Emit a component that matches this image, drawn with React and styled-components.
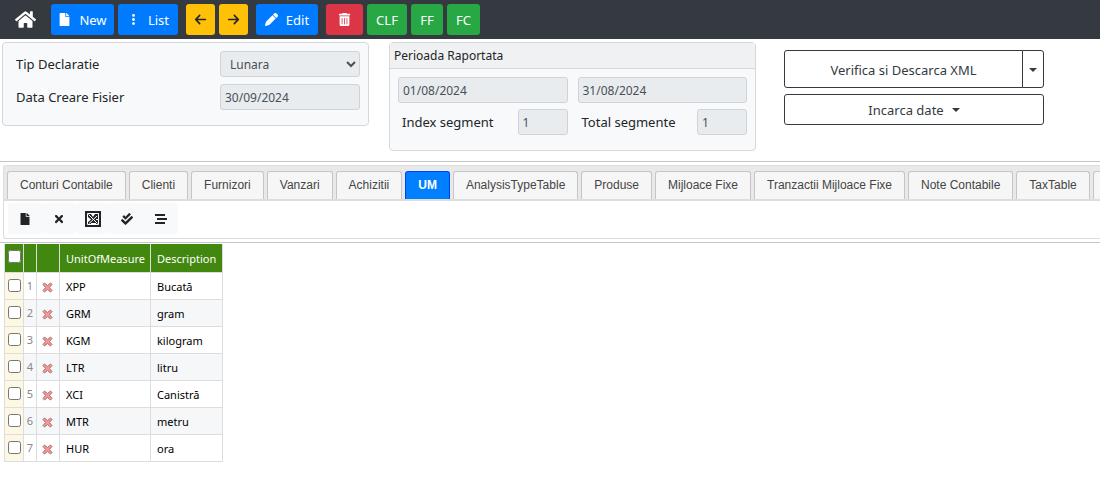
import React from "react";
import styled, { createGlobalStyle, css } from "styled-components";
import { FaHome, FaFile, FaCheckDouble, FaTimes } from "react-icons/fa";
import { FaArrowLeft, FaArrowRight, FaEllipsisVertical, FaPen, FaTrashCan } from "react-icons/fa6";

const GlobalStyle = createGlobalStyle`
  * {
    box-sizing: border-box;
  }
  body {
    margin: 0;
    background: #fff;
    color: #212529;
    font-family: "Segoe UI", "Noto Sans", sans-serif;
    font-size: 13px;
    line-height: 20px;
    overflow-x: hidden;
  }
  button, input, select {
    font: inherit;
  }
`;

const Navbar = styled.header`
  display: flex;
  align-items: center;
  height: 39px;
  padding-left: 15px;
  background: #343a40;
`;

const HomeLink = styled.a`
  display: flex;
  margin-right: 15px;
  color: #fff;
  font-size: 21px;
`;

const ButtonGroup = styled.div`
  display: flex;
  gap: 4px;
  margin-right: 8px;
`;

const colors = {
  blue: css`
    background: #007bff;
    color: #fff;
  `,
  yellow: css`
    background: #ffc107;
    color: #212529;
  `,
  red: css`
    background: #dc3545;
    color: #fff;
  `,
  green: css`
    background: #28a745;
    color: #fff;
  `,
};

const NavButton = styled.button`
  display: flex;
  align-items: center;
  justify-content: center;
  gap: 8px;
  height: 31px;
  min-width: ${(props) => props.$width}px;
  padding: 0;
  border: 0;
  border-radius: 3px;
  ${(props) => colors[props.$color]}
`;

const Filters = styled.section`
  display: grid;
  grid-template-columns: 1fr 1fr 324px;
  align-items: start;
  gap: 20px;
  padding: 3px 0 10px 2px;
`;

const Card = styled.div`
  border: 1px solid #d5d8da;
  border-radius: 4px;
  background: #f8f9fa;
`;

const CardTitle = styled.div`
  height: 26px;
  padding: 3px 4px;
  border-bottom: 1px solid #d5d8da;
  background: #f0f1f2;
  font-size: 12px;
`;

const DeclarationFields = styled.div`
  display: grid;
  grid-template-columns: 1fr 140px;
  align-items: center;
  row-gap: 7px;
  padding: 8px 8px 15px 13px;
`;

const PeriodFields = styled.div`
  display: grid;
  grid-template-columns: 1fr 1fr;
  gap: 6px 10px;
  padding: 8px 8px 15px;
`;

const Segment = styled.div`
  display: flex;
  align-items: center;
  justify-content: space-between;
  padding-left: 4px;
`;

const fieldStyle = css`
  width: ${(props) => (props.$short ? "50px" : "100%")};
  height: 26px;
  border: 1px solid #ced4da;
  border-radius: 3px;
  background: #e9ecef;
  color: #495057;
  font-size: 12px;
  opacity: 1;
`;

const Input = styled.input`
  ${fieldStyle}
  padding: 1px 4px 0;
`;

const Select = styled.select`
  ${fieldStyle}
  padding: 0 0 0 5px;
`;

const Actions = styled.div`
  display: flex;
  flex-direction: column;
  gap: 6px;
  padding: 8px 56px 0 8px;
`;

const SplitButton = styled.div`
  display: flex;
`;

const OutlineButton = styled.button`
  display: flex;
  flex: 1;
  align-items: center;
  justify-content: center;
  gap: 8px;
  min-height: ${(props) => (props.$tall ? 38 : 31)}px;
  padding: 1px 0 0;
  border: 1px solid #343a40;
  border-radius: ${(props) => (props.$tall ? "3px 0 0 3px" : "3px")};
  background: #fff;
  color: #343a40;
`;

const ToggleButton = styled(OutlineButton)`
  flex: 0 0 22px;
  margin-left: -1px;
  border-radius: 0 3px 3px 0;
`;

const Caret = styled.span`
  border: 4px solid transparent;
  border-top-color: currentColor;
  border-bottom: 0;
`;

const TabsFrame = styled.section`
  padding: 3px 0 3px 3px;
  border: solid #c5c5c5;
  border-width: 1px 0;
`;

const Tabs = styled.div`
  border: 1px solid #ddd;
  border-right: 0;
  border-radius: 3px 0 0 3px;
  overflow: hidden;
`;

const TabList = styled.nav`
  display: flex;
  gap: 3px;
  height: 35px;
  padding: 5px 0 0 3px;
  border-bottom: 2px solid #ddd;
  background: #e9e9e9;
  overflow: hidden;
`;

const Tab = styled.button`
  flex: none;
  padding: 0 12px 1px;
  border: 1px solid #c5c5c5;
  border-bottom: 0;
  border-radius: 3px 3px 0 0;
  background: #f6f6f6;
  color: #454545;
  font-family: Arial, "Liberation Sans", sans-serif;
  font-size: 12px;
  white-space: nowrap;

  ${(props) =>
    props.$active &&
    css`
      border-color: #003eff;
      background: #007fff;
      color: #fff;
      font-weight: bold;
    `}
`;

const Toolbar = styled.div`
  display: flex;
  padding: 2px 4px 4px;
`;

const ToolButton = styled.button`
  display: flex;
  align-items: center;
  justify-content: center;
  width: 34px;
  height: 31px;
  padding: 0;
  border: 0;
  border-radius: 3px;
  background: #f8f9fa;
  color: #212529;
  font-size: 12px;
`;

const Grid = styled.table`
  margin: 1px 0 0 4px;
  border-collapse: collapse;
  table-layout: fixed;
  width: 219px;
  color: #000;
  font-size: 11px;
  line-height: 16px;

  th,
  td {
    height: 27px;
    padding: 2px 0 0 6px;
    border: 1px solid #ddd;
    font-weight: normal;
    text-align: left;
    white-space: nowrap;
  }

  th {
    height: 28px;
    border-top: 0;
    background: #42870f;
    color: #fff;
  }

  tbody tr:nth-child(even) {
    background: #f6f7f9;
  }
`;

const CheckCell = styled.td`
  && {
    padding: 0 0 0 3px;
    background: #fcf8e3;
  }
`;

const CheckHead = styled.th`
  && {
    padding: 0 0 2px 3px;
  }
`;

const NumberCell = styled.td`
  && {
    padding: 0;
    color: #888;
    font-size: 11px;
    text-align: center;
  }
`;

const DeleteCell = styled.td`
  && {
    padding: 3px 0 0 5px;
  }
`;

const Checkbox = styled.input`
  display: block;
  width: 13px;
  height: 13px;
  margin: 0;
`;

const DeleteButton = styled.button`
  display: flex;
  padding: 0;
  border: 0;
  background: none;
`;

const ExcelIcon = () => (
  <svg width="16" height="16" viewBox="0 0 16 16">
    <path d="M0 0h16v16H0z" fill="#212529" />
    <path d="M2.5 2.5h11v11h-11z" fill="none" stroke="#fff" />
    <path d="M6 3h4L8 6zM3 6l3 2.5L3 11z" fill="#fff" />
    <path d="M3.5 3.5l9 9M12 5l-8 7.5" stroke="#fff" />
    <path d="M11 8.5h2M6 12.5h5" stroke="#fff" />
  </svg>
);

const LinesIcon = () => (
  <svg width="12" height="12" viewBox="0 0 12 12">
    <path d="M0 2h10M2 6h10M0 10h10" stroke="currentColor" strokeWidth="2" />
  </svg>
);

const DeleteIcon = () => (
  <svg width="11" height="11" viewBox="0 0 11 11">
    <path
      d="M1 2.5L2.5 1 5.5 3.5 8.5 1 10 2.5 7.5 5.5 10 8.5 8.5 10 5.5 7.5 2.5 10 1 8.5 3.5 5.5z"
      fill="#ff9292"
      stroke="#a07878"
    />
  </svg>
);

const tabs = [
  "Conturi Contabile",
  "Clienti",
  "Furnizori",
  "Vanzari",
  "Achizitii",
  "UM",
  "AnalysisTypeTable",
  "Produse",
  "Mijloace Fixe",
  "Tranzactii Mijloace Fixe",
  "Note Contabile",
  "TaxTable",
  "",
];

const units = [
  ["XPP", "Bucată"],
  ["GRM", "gram"],
  ["KGM", "kilogram"],
  ["LTR", "litru"],
  ["XCI", "Canistră"],
  ["MTR", "metru"],
  ["HUR", "ora"],
];

const Header = () => (
  <Navbar>
    <HomeLink href="#" aria-label="Home">
      <FaHome />
    </HomeLink>
    <ButtonGroup>
      <NavButton $color="blue" $width={63}>
        <FaFile /> New
      </NavButton>
      <NavButton $color="blue" $width={60}>
        <FaEllipsisVertical /> List
      </NavButton>
    </ButtonGroup>
    <ButtonGroup>
      <NavButton $color="yellow" $width={29} aria-label="Previous">
        <FaArrowLeft />
      </NavButton>
      <NavButton $color="yellow" $width={29} aria-label="Next">
        <FaArrowRight />
      </NavButton>
    </ButtonGroup>
    <ButtonGroup>
      <NavButton $color="blue" $width={62}>
        <FaPen /> Edit
      </NavButton>
    </ButtonGroup>
    <ButtonGroup>
      <NavButton $color="red" $width={37} aria-label="Delete">
        <FaTrashCan />
      </NavButton>
      <NavButton $color="green" $width={40}>
        CLF
      </NavButton>
      <NavButton $color="green" $width={32}>
        FF
      </NavButton>
      <NavButton $color="green" $width={33}>
        FC
      </NavButton>
    </ButtonGroup>
  </Navbar>
);

const App = () => (
  <>
    <GlobalStyle />
    <Header />
    <main>
      <Filters>
        <Card>
          <DeclarationFields>
            <label htmlFor="type">Tip Declaratie</label>
            <Select id="type" disabled>
              <option>Lunara</option>
            </Select>
            <label htmlFor="created">Data Creare Fisier</label>
            <Input id="created" defaultValue="30/09/2024" disabled />
          </DeclarationFields>
        </Card>
        <Card>
          <CardTitle>Perioada Raportata</CardTitle>
          <PeriodFields>
            <Input aria-label="De la" defaultValue="01/08/2024" disabled />
            <Input aria-label="Pana la" defaultValue="31/08/2024" disabled />
            <Segment>
              <label htmlFor="index">Index segment</label>
              <Input id="index" $short defaultValue="1" disabled />
            </Segment>
            <Segment>
              <label htmlFor="total">Total segmente</label>
              <Input id="total" $short defaultValue="1" disabled />
            </Segment>
          </PeriodFields>
        </Card>
        <Actions>
          <SplitButton>
            <OutlineButton $tall>Verifica si Descarca XML</OutlineButton>
            <ToggleButton $tall aria-label="Optiuni">
              <Caret />
            </ToggleButton>
          </SplitButton>
          <OutlineButton>
            Incarca date <Caret />
          </OutlineButton>
        </Actions>
      </Filters>
      <TabsFrame>
        <Tabs>
          <TabList>
            {tabs.map((tab) => (
              <Tab key={tab} $active={tab === "UM"}>
                {tab}
              </Tab>
            ))}
          </TabList>
          <Toolbar>
            <ToolButton aria-label="Adauga">
              <FaFile />
            </ToolButton>
            <ToolButton aria-label="Sterge">
              <FaTimes />
            </ToolButton>
            <ToolButton aria-label="Excel">
              <ExcelIcon />
            </ToolButton>
            <ToolButton aria-label="Selecteaza tot">
              <FaCheckDouble />
            </ToolButton>
            <ToolButton aria-label="Linii">
              <LinesIcon />
            </ToolButton>
          </Toolbar>
        </Tabs>
      </TabsFrame>
      <Grid>
        <colgroup>
          <col width="19" />
          <col width="13" />
          <col width="23" />
          <col width="91" />
          <col width="72" />
        </colgroup>
        <thead>
          <tr>
            <CheckHead>
              <Checkbox type="checkbox" aria-label="Toate" />
            </CheckHead>
            <th />
            <th />
            <th>UnitOfMeasure</th>
            <th>Description</th>
          </tr>
        </thead>
        <tbody>
          {units.map(([code, description], i) => (
            <tr key={code}>
              <CheckCell>
                <Checkbox type="checkbox" aria-label={code} />
              </CheckCell>
              <NumberCell>{i + 1}</NumberCell>
              <DeleteCell>
                <DeleteButton aria-label={`Sterge ${code}`}>
                  <DeleteIcon />
                </DeleteButton>
              </DeleteCell>
              <td>{code}</td>
              <td>{description}</td>
            </tr>
          ))}
        </tbody>
      </Grid>
    </main>
  </>
);

export default App;
